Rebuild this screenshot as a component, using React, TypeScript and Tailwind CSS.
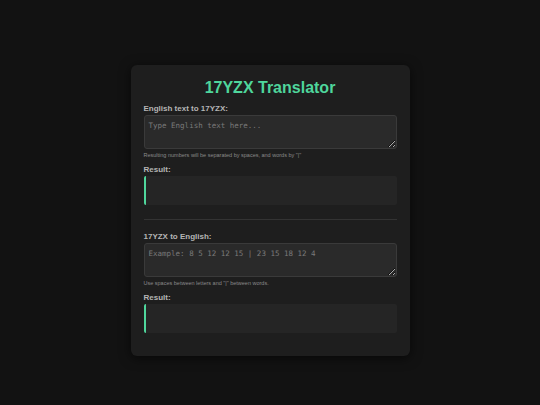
import React from "react";

function Section({
  label,
  placeholder,
  hint,
}: {
  label: string;
  placeholder: string;
  hint: string;
}) {
  return (
    <div className="flex flex-col">
      <label className="text-[8px] font-bold leading-[10px] text-[#b5b5b5]">{label}</label>
      <textarea
        className="mt-[1px] h-[34px] w-full resize-y rounded-[3px] border border-[#3a3a3a] bg-[#2a2a2a] px-[4px] py-[5px] font-['DejaVu_Sans_Mono',monospace] text-[7.5px] leading-[10px] text-[#ddd] outline-none placeholder:text-[#7a7a7a]"
        placeholder={placeholder}
      />
      <p className="mt-[2px] text-[5.5px] leading-[8px] text-[#8a8a8a]">{hint}</p>
      <span className="mt-[6px] text-[8px] font-bold leading-[10px] text-[#b5b5b5]">Result:</span>
      <div className="mt-[1px] h-[29px] w-full rounded-[2px] border-l-2 border-[#4fd69c] bg-[#252525]" />
    </div>
  );
}

export default function App() {
  return (
    <div className="flex min-h-[405px] w-full items-start justify-center bg-[#121212] pt-[65px] font-['Liberation_Sans',Arial,sans-serif]">
      <div className="w-[279px] rounded-[6px] bg-[#1e1e1e] px-[13px] pt-[14px] pb-[23px] shadow-[0_2px_12px_rgba(0,0,0,0.6)]">
        <h1 className="text-center text-[16px] font-bold leading-[18px] text-[#4fd69c]">17YZX Translator</h1>
        <div className="mt-[7px]">
          <Section
            label="English text to 17YZX:"
            placeholder="Type English text here..."
            hint='Resulting numbers will be separated by spaces, and words by "|"'
          />
        </div>
        <hr className="mt-[14px] mb-[12px] border-t border-[#333]" />
        <div className="mt-[12px]">
          <Section
            label="17YZX to English:"
            placeholder="Example: 8 5 12 12 15 | 23 15 18 12 4"
            hint='Use spaces between letters and "|" between words.'
          />
        </div>
      </div>
    </div>
  );
}
